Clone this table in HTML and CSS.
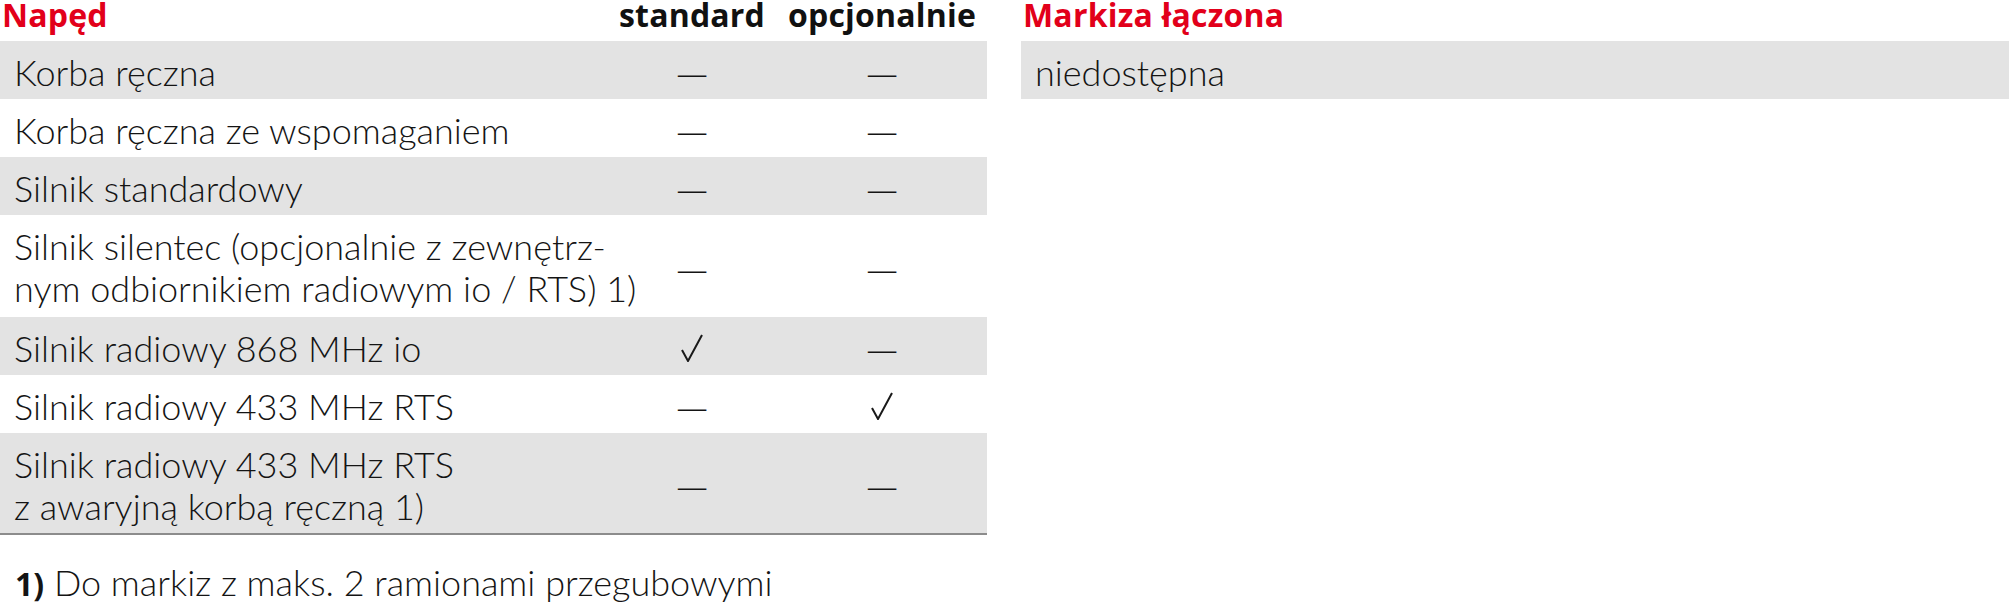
FILE: index.html
```html
<!DOCTYPE html>
<html lang="pl">
<head>
<meta charset="utf-8">
<title>Napęd</title>
<link rel="stylesheet" href="styles.css">
</head>
<body>
<div class="page">
  <section class="drive">
    <div class="row head">
      <div class="title">Napęd</div>
      <div class="colhead">standard</div>
      <div class="colhead">opcjonalnie</div>
    </div>
    <div class="row gray">
      <div class="label">Korba ręczna</div>
      <div class="val">—</div>
      <div class="val">—</div>
    </div>
    <div class="row">
      <div class="label">Korba ręczna ze wspomaganiem</div>
      <div class="val">—</div>
      <div class="val">—</div>
    </div>
    <div class="row gray">
      <div class="label">Silnik standardowy</div>
      <div class="val">—</div>
      <div class="val">—</div>
    </div>
    <div class="row tall">
      <div class="label">Silnik silentec (opcjonalnie z zewnętrz-<br>nym odbiornikiem radiowym io / RTS) 1)</div>
      <div class="val">—</div>
      <div class="val">—</div>
    </div>
    <div class="row gray">
      <div class="label">Silnik radiowy 868 MHz io</div>
      <div class="val"><svg class="check" viewBox="0 0 24 28" width="24" height="28"><polyline points="2,16 8,27 22,1" /></svg></div>
      <div class="val">—</div>
    </div>
    <div class="row">
      <div class="label">Silnik radiowy 433 MHz RTS</div>
      <div class="val">—</div>
      <div class="val"><svg class="check" viewBox="0 0 24 28" width="24" height="28"><polyline points="2,16 8,27 22,1" /></svg></div>
    </div>
    <div class="row gray tall last">
      <div class="label">Silnik radiowy 433 MHz RTS<br>z awaryjną korbą ręczną 1)</div>
      <div class="val">—</div>
      <div class="val">—</div>
    </div>
    <p class="note"><b>1)</b> Do markiz z maks. 2 ramionami przegubowymi</p>
  </section>
  <section class="combo">
    <div class="head single">
      <div class="title">Markiza łączona</div>
    </div>
    <div class="row single gray">
      <div class="label">niedostępna</div>
    </div>
  </section>
</div>
</body>
</html>
```
FILE: styles.css
```css
html, body {
  margin: 0;
  padding: 0;
  background: #ffffff;
}
body {
  font-family: "Lato", "Liberation Sans", sans-serif;
  font-weight: 300;
  color: #141414;
  overflow: hidden;
}
.page {
  display: flex;
  gap: 34px;
  width: 2009px;
}
.drive {
  width: 987px;
  flex: none;
}
.combo {
  flex: 1;
}
.row {
  display: grid;
  grid-template-columns: 597px 190px 190px;
  padding-right: 10px;
  height: 58px;
  font-size: 36px;
  line-height: 42px;
}
.row.single {
  display: block;
  padding-right: 0;
}
.row.tall {
  height: 102px;
}
.row.gray {
  background: #e3e3e3;
}
.row.last {
  border-bottom: 2px solid #8c8c8c;
  height: 100px;
}
.head {
  height: 30px;
  padding-bottom: 11px;
  font-family: "Open Sans", "Liberation Sans", sans-serif;
  font-weight: 700;
  font-size: 32px;
  line-height: 30px;
  letter-spacing: 0.2px;
}
.head.row {
  height: 30px;
}
.title {
  color: #e2001a;
  padding-left: 2px;
}
.colhead {
  text-align: center;
  color: #111;
}
.label {
  padding: 10px 0 0 14px;
  white-space: nowrap;
}
.val {
  display: flex;
  align-items: center;
  justify-content: center;
  padding-top: 4px;
  font-size: 44px;
}
.check {
  display: block;
  fill: none;
  stroke: #1a1a1a;
  stroke-width: 2;
  stroke-linejoin: miter;
  stroke-linecap: butt;
}
.note {
  margin: 29px 0 0 15px;
  font-size: 36px;
  line-height: 36px;
}
.note b {
  font-family: "Open Sans", "Liberation Sans", sans-serif;
  font-weight: 700;
  font-size: 32px;
}
```
